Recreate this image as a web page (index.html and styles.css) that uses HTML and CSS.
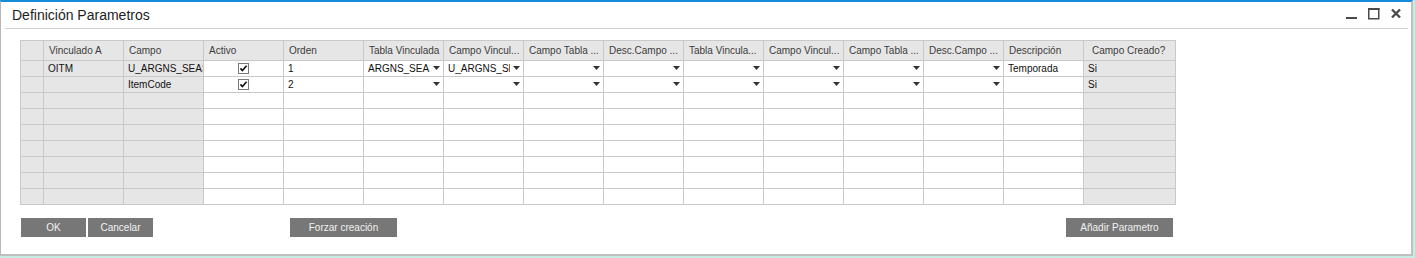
FILE: index.html
```html
<!DOCTYPE html>
<html lang="es">
<head>
<meta charset="utf-8">
<title>Definición Parametros</title>
<link rel="stylesheet" href="styles.css">
</head>
<body>
<div class="window">
  <div class="titlebar">
    <h1 class="title">Definición Parametros</h1>
    <div class="controls">
      <svg class="ctl" width="12" height="12" viewBox="0 0 12 12"><rect x="0" y="9" width="11" height="2" fill="#4a4a4a"/></svg>
      <svg class="ctl" width="12" height="12" viewBox="0 0 12 12"><rect x="0.75" y="0.75" width="10" height="10" fill="none" stroke="#4a4a4a" stroke-width="1.5"/><rect x="0" y="0" width="11.5" height="2" fill="#4a4a4a"/></svg>
      <svg class="ctl" width="12" height="12" viewBox="0 0 12 12"><path d="M2 1.5 L10 9.5 M10 1.5 L2 9.5" stroke="#4a4a4a" stroke-width="2.4" fill="none"/></svg>
    </div>
  </div>
  <div class="content">
    <table class="grid">
      <colgroup>
        <col class="c-rn"><col class="c-std"><col class="c-std"><col class="c-std"><col class="c-std"><col class="c-std"><col class="c-std"><col class="c-std"><col class="c-std"><col class="c-std"><col class="c-std"><col class="c-std"><col class="c-std"><col class="c-std"><col class="c-last">
      </colgroup>
      <thead>
        <tr class="hrow">
          <th></th>
          <th>Vinculado A</th>
          <th>Campo</th>
          <th>Activo</th>
          <th>Orden</th>
          <th>Tabla Vinculada</th>
          <th>Campo Vincul...</th>
          <th>Campo Tabla ...</th>
          <th>Desc.Campo ...</th>
          <th>Tabla Vincula...</th>
          <th>Campo Vincul...</th>
          <th>Campo Tabla ...</th>
          <th>Desc.Campo ...</th>
          <th>Descripción</th>
          <th class="h-last">Campo Creado?</th>
        </tr>
      </thead>
      <tbody>
        <tr>
          <td class="ro"></td>
          <td class="ro">OITM</td>
          <td class="ro">U_ARGNS_SEASON</td>
          <td class="chk"><svg width="11" height="11" viewBox="0 0 11 11"><rect x="0.5" y="0.5" width="10" height="10" fill="#fff" stroke="#7a7a7a"/><path d="M2.4 5.4 L4.4 7.6 L8.6 2.8" stroke="#111" stroke-width="1.6" fill="none"/></svg></td>
          <td>1</td>
          <td class="dd"><div class="ddw"><span class="ddt">ARGNS_SEASON</span><svg class="arr" width="7" height="4" viewBox="0 0 7 4"><path d="M0 0 H7 L3.5 4 Z" fill="#333"/></svg></div></td>
          <td class="dd"><div class="ddw"><span class="ddt">U_ARGNS_SEASON</span><svg class="arr" width="7" height="4" viewBox="0 0 7 4"><path d="M0 0 H7 L3.5 4 Z" fill="#333"/></svg></div></td>
          <td class="dd"><div class="ddw"><span class="ddt"></span><svg class="arr" width="7" height="4" viewBox="0 0 7 4"><path d="M0 0 H7 L3.5 4 Z" fill="#333"/></svg></div></td>
          <td class="dd"><div class="ddw"><span class="ddt"></span><svg class="arr" width="7" height="4" viewBox="0 0 7 4"><path d="M0 0 H7 L3.5 4 Z" fill="#333"/></svg></div></td>
          <td class="dd"><div class="ddw"><span class="ddt"></span><svg class="arr" width="7" height="4" viewBox="0 0 7 4"><path d="M0 0 H7 L3.5 4 Z" fill="#333"/></svg></div></td>
          <td class="dd"><div class="ddw"><span class="ddt"></span><svg class="arr" width="7" height="4" viewBox="0 0 7 4"><path d="M0 0 H7 L3.5 4 Z" fill="#333"/></svg></div></td>
          <td class="dd"><div class="ddw"><span class="ddt"></span><svg class="arr" width="7" height="4" viewBox="0 0 7 4"><path d="M0 0 H7 L3.5 4 Z" fill="#333"/></svg></div></td>
          <td class="dd"><div class="ddw"><span class="ddt"></span><svg class="arr" width="7" height="4" viewBox="0 0 7 4"><path d="M0 0 H7 L3.5 4 Z" fill="#333"/></svg></div></td>
          <td>Temporada</td>
          <td class="ro">Si</td>
        </tr>
        <tr>
          <td class="ro"></td>
          <td class="ro"></td>
          <td class="ro">ItemCode</td>
          <td class="chk"><svg width="11" height="11" viewBox="0 0 11 11"><rect x="0.5" y="0.5" width="10" height="10" fill="#fff" stroke="#7a7a7a"/><path d="M2.4 5.4 L4.4 7.6 L8.6 2.8" stroke="#111" stroke-width="1.6" fill="none"/></svg></td>
          <td>2</td>
          <td class="dd"><div class="ddw"><span class="ddt"></span><svg class="arr" width="7" height="4" viewBox="0 0 7 4"><path d="M0 0 H7 L3.5 4 Z" fill="#333"/></svg></div></td>
          <td class="dd"><div class="ddw"><span class="ddt"></span><svg class="arr" width="7" height="4" viewBox="0 0 7 4"><path d="M0 0 H7 L3.5 4 Z" fill="#333"/></svg></div></td>
          <td class="dd"><div class="ddw"><span class="ddt"></span><svg class="arr" width="7" height="4" viewBox="0 0 7 4"><path d="M0 0 H7 L3.5 4 Z" fill="#333"/></svg></div></td>
          <td class="dd"><div class="ddw"><span class="ddt"></span><svg class="arr" width="7" height="4" viewBox="0 0 7 4"><path d="M0 0 H7 L3.5 4 Z" fill="#333"/></svg></div></td>
          <td class="dd"><div class="ddw"><span class="ddt"></span><svg class="arr" width="7" height="4" viewBox="0 0 7 4"><path d="M0 0 H7 L3.5 4 Z" fill="#333"/></svg></div></td>
          <td class="dd"><div class="ddw"><span class="ddt"></span><svg class="arr" width="7" height="4" viewBox="0 0 7 4"><path d="M0 0 H7 L3.5 4 Z" fill="#333"/></svg></div></td>
          <td class="dd"><div class="ddw"><span class="ddt"></span><svg class="arr" width="7" height="4" viewBox="0 0 7 4"><path d="M0 0 H7 L3.5 4 Z" fill="#333"/></svg></div></td>
          <td class="dd"><div class="ddw"><span class="ddt"></span><svg class="arr" width="7" height="4" viewBox="0 0 7 4"><path d="M0 0 H7 L3.5 4 Z" fill="#333"/></svg></div></td>
          <td></td>
          <td class="ro">Si</td>
        </tr>
        <tr><td class="ro"></td><td class="ro"></td><td class="ro"></td><td></td><td></td><td></td><td></td><td></td><td></td><td></td><td></td><td></td><td></td><td></td><td class="ro"></td></tr>
        <tr><td class="ro"></td><td class="ro"></td><td class="ro"></td><td></td><td></td><td></td><td></td><td></td><td></td><td></td><td></td><td></td><td></td><td></td><td class="ro"></td></tr>
        <tr><td class="ro"></td><td class="ro"></td><td class="ro"></td><td></td><td></td><td></td><td></td><td></td><td></td><td></td><td></td><td></td><td></td><td></td><td class="ro"></td></tr>
        <tr><td class="ro"></td><td class="ro"></td><td class="ro"></td><td></td><td></td><td></td><td></td><td></td><td></td><td></td><td></td><td></td><td></td><td></td><td class="ro"></td></tr>
        <tr><td class="ro"></td><td class="ro"></td><td class="ro"></td><td></td><td></td><td></td><td></td><td></td><td></td><td></td><td></td><td></td><td></td><td></td><td class="ro"></td></tr>
        <tr><td class="ro"></td><td class="ro"></td><td class="ro"></td><td></td><td></td><td></td><td></td><td></td><td></td><td></td><td></td><td></td><td></td><td></td><td class="ro"></td></tr>
        <tr><td class="ro"></td><td class="ro"></td><td class="ro"></td><td></td><td></td><td></td><td></td><td></td><td></td><td></td><td></td><td></td><td></td><td></td><td class="ro"></td></tr>
      </tbody>
    </table>
    <div class="actions">
      <button class="btn btn-sm">OK</button>
      <button class="btn btn-sm">Cancelar</button>
      <button class="btn btn-lg btn-force">Forzar creación</button>
      <button class="btn btn-lg btn-add">Añadir Parametro</button>
    </div>
  </div>
</div>
</body>
</html>
```
FILE: styles.css
```css
html, body {
  margin: 0;
  padding: 0;
}
body {
  background: #c6ece3;
  font-family: "Liberation Sans", Arial, sans-serif;
  width: 1415px;
  height: 258px;
  overflow: hidden;
}
.window {
  box-sizing: border-box;
  width: 1413px;
  height: 256px;
  background: #fff;
  border-top: 2px solid #168bd7;
  border-left: 1px solid #b8b8b8;
  border-right: 2px solid #bfbfbf;
  border-bottom: 2px solid #bfbfbf;
}
.titlebar {
  display: flex;
  align-items: flex-start;
  justify-content: space-between;
  height: 26px;
  margin: 0 3px 0 4px;
  padding: 0 6px 0 7px;
  border-bottom: 1px solid #d0d0d0;
}
.title {
  margin: 5px 0 0 0;
  font-size: 14px;
  line-height: 16px;
  font-weight: normal;
  color: #1e1e1e;
}
.controls {
  display: flex;
  gap: 10px;
  margin-top: 6px;
}
.ctl {
  display: block;
}
.content {
  padding: 11px 0 0 19px;
}
.grid {
  border-collapse: collapse;
  table-layout: fixed;
  width: 1156px;
  font-size: 10px;
}
.c-rn { width: 23px; }
.c-std { width: 80px; }
.c-last { width: 92px; }
.grid th, .grid td {
  border: 1px solid #c9c9c9;
  padding: 0 0 0 4px;
  white-space: nowrap;
  overflow: hidden;
  text-overflow: clip;
  text-align: left;
  vertical-align: middle;
}
.grid th {
  background: #e6e6e6;
  font-weight: normal;
  color: #3c3c3c;
  padding-left: 5px;
  height: 19px;
  line-height: 12px;
}
.grid th.h-last {
  padding-left: 8px;
}
.grid td {
  height: 15px;
  line-height: 12px;
  color: #111;
  background: #fff;
}
.grid td.ro {
  background: #e6e6e6;
}
.grid td.chk {
  text-align: center;
  padding: 0;
}
.grid td.chk svg {
  display: inline-block;
  vertical-align: middle;
}
.grid td.dd {
  padding: 0 3px 0 4px;
}
.ddw {
  display: flex;
  align-items: center;
  gap: 3px;
}
.ddt {
  flex: 1;
  min-width: 0;
  overflow: hidden;
  white-space: nowrap;
}
.arr {
  flex: none;
  display: block;
  margin-top: -1px;
}
.actions {
  display: flex;
  width: 1152px;
  margin: 13px 0 0 1px;
}
.btn {
  height: 19px;
  padding: 0;
  border: 0;
  background: #777777;
  color: #f2f2f2;
  font-family: "Liberation Sans", Arial, sans-serif;
  font-size: 10px;
  line-height: 19px;
  text-align: center;
}
.btn-sm {
  width: 65px;
  margin-right: 2px;
}
.btn-lg {
  width: 107px;
}
.btn-force {
  margin-left: 135px;
}
.btn-add {
  margin-left: auto;
}
```
